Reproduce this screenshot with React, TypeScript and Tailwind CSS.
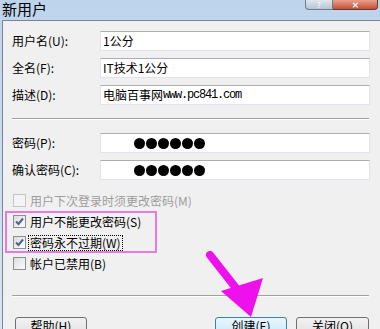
import React from "react";

const cjk = { fontFamily: '"Noto Sans CJK SC", "Noto Sans", sans-serif' };

function TextBox({ children }: { children?: React.ReactNode }) {
  return (
    <div className="flex-1 h-[20px] bg-white border border-[#e2e3ea] border-t-[#abadb3] flex items-center pl-[2px] text-[12px] text-black leading-none">
      {children}
    </div>
  );
}

function Dots() {
  return (
    <div className="flex gap-[1px] pl-[31px]">
      {[0, 1, 2, 3, 4, 5].map((i) => (
        <div key={i} className="w-[11px] h-[11px] rounded-full bg-black" />
      ))}
    </div>
  );
}

function Field({ label, children }: { label: string; children?: React.ReactNode }) {
  return (
    <div className="flex items-center h-[20px]">
      <div className="w-[88px] text-[12px] text-black leading-none">{label}</div>
      <TextBox>{children}</TextBox>
    </div>
  );
}

function Check({
  label,
  checked,
  disabled,
  focused,
}: {
  label: string;
  checked?: boolean;
  disabled?: boolean;
  focused?: boolean;
}) {
  return (
    <div className="flex items-center h-[21px] pl-[1px]">
      <div
        className={
          disabled
            ? "w-[13px] h-[13px] border border-[#c5c5c5] bg-[#f4f4f4]"
            : "w-[13px] h-[13px] border border-[#8e8f8f] bg-gradient-to-br from-[#dcdcdc] to-[#fdfdfd] flex items-center justify-center"
        }
      >
        {checked && (
          <svg width="9" height="9" viewBox="0 0 9 9">
            <path d="M1 4.5 L3.5 7 L8 1.5" stroke="#4a6496" strokeWidth="2" fill="none" />
          </svg>
        )}
      </div>
      <span
        className={
          (disabled ? "text-[#9d9d9d] " : "text-black ") +
          (focused ? "outline outline-1 outline-dotted outline-black " : "") +
          "ml-[3px] text-[12px] leading-[14px] px-[1px]"
        }
      >
        {label}
      </span>
    </div>
  );
}

function Btn({ label, active }: { label: string; active?: boolean }) {
  return (
    <div
      className={
        (active
          ? "border-[#3c7fb1] bg-gradient-to-b from-[#eaf6fd] to-[#bee6fd] "
          : "border-[#707070] bg-gradient-to-b from-[#f2f2f2] to-[#dddddd] ") +
        "h-[23px] border rounded-[3px] flex justify-center pt-[2px] text-[12px] text-black leading-none"
      }
    >
      {label}
    </div>
  );
}

export default function App() {
  return (
    <div className="relative w-[380px] h-[329px] overflow-hidden bg-gradient-to-b from-[#bed4ec] to-[#d6e5f4]" style={cjk}>
      {/* title bar */}
      <div className="flex h-[20px]">
        <div className="pl-[2px] text-[15px] leading-[18px] text-black">新用户</div>
        <div className="ml-auto flex mr-[2px] h-[10px]">
          <div className="w-[28px] border border-t-0 border-[#6d7c8d] rounded-bl-[4px] bg-gradient-to-b from-[#dfe6ee] to-[#b7c4d2] flex items-center justify-center text-[8px] text-white leading-none">
            ?
          </div>
          <div className="w-[45px] border border-t-0 border-[#6d3a30] border-l-0 rounded-br-[4px] bg-gradient-to-b from-[#e8a08e] to-[#c64d36] flex items-center justify-center text-[8px] text-white font-bold leading-none">
            ✕
          </div>
        </div>
      </div>

      {/* dialog body */}
      <div className="ml-[2px] h-[309px] border-l border-t border-[#7a8593] bg-[#f0f0f0] pl-[9px] pr-[10px] pt-[10px]">
        <div className="flex flex-col gap-[7px]">
          <Field label="用户名(U):">1公分</Field>
          <Field label="全名(F):">IT技术1公分</Field>
          <Field label="描述(D):">
            电脑百事网
            <span
              className="text-[12px] tracking-[-1.2px]"
              style={{ fontFamily: '"Liberation Mono", monospace' }}
            >
              www.pc841.com
            </span>
          </Field>
        </div>

        <div className="mt-[13px] mr-[1px] border-t border-[#a0a0a0] border-b border-b-white" />

        <div className="mt-[13px] flex flex-col gap-[7px]">
          <Field label="密码(P):">
            <Dots />
          </Field>
          <Field label="确认密码(C):">
            <Dots />
          </Field>
        </div>

        <div className="mt-[10px] flex flex-col">
          <Check label="用户下次登录时须更改密码(M)" disabled />
          <Check label="用户不能更改密码(S)" checked />
          <Check label="密码永不过期(W)" checked focused />
          <Check label="帐户已禁用(B)" />
        </div>

        <div className="mt-[21px] mr-[1px] border-t border-[#a0a0a0] border-b border-b-white" />

        <div className="mt-[20px] flex pl-[3px] pr-[1px]">
          <div className="w-[72px]">
            <Btn label="帮助(H)" />
          </div>
          <div className="ml-auto w-[72px]">
            <Btn label="创建(E)" active />
          </div>
          <div className="ml-[9px] w-[73px]">
            <Btn label="关闭(O)" />
          </div>
        </div>
      </div>

      {/* annotations */}
      <div className="absolute left-[5px] top-[211px] w-[152px] h-[42px] border-2 border-[#e47ae4]" />
      <svg className="absolute left-0 top-0" width="380" height="329" viewBox="0 0 380 329">
        <line x1="210" y1="255" x2="243" y2="297" stroke="#ee11ee" strokeWidth="8" strokeLinecap="round" />
        <polygon points="221,291 263,278 251,317" fill="#ee11ee" />
      </svg>
    </div>
  );
}
